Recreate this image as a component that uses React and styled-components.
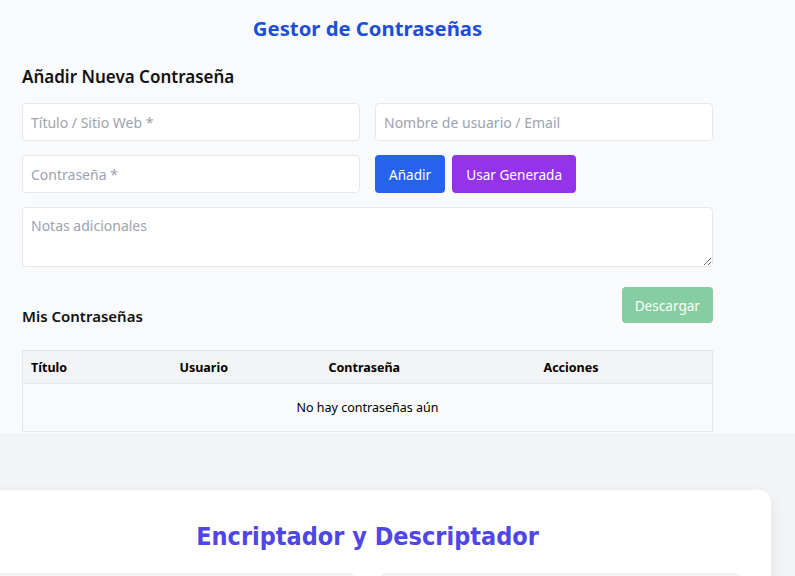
import React from 'react';
import styled, { createGlobalStyle } from 'styled-components';

const GlobalStyle = createGlobalStyle`
  html, body {
    margin: 0;
    padding: 0;
    background: #f3f4f6;
    font-family: "Noto Sans", "Open Sans", sans-serif;
    overflow: hidden;
  }
  * { box-sizing: border-box; }
`;

const ManagerSection = styled.section`
  background: #f9fafb;
  padding: 14px 0 1px 22px;
`;

const Container = styled.div`
  width: 691px;
`;

const PageTitle = styled.h1`
  margin: 0 0 23px;
  text-align: center;
  font-size: 20.3px;
  font-weight: 700;
  color: #1d4ed8;
  line-height: 28px;
`;

const SubTitle = styled.h2`
  margin: 0 0 14px;
  font-size: 17px;
  font-weight: 600;
  color: #111;
  line-height: 24px;
`;

const FormGrid = styled.div`
  display: grid;
  grid-template-columns: 1fr 1fr;
  gap: 14px 15px;
`;

const Input = styled.input`
  height: 38px;
  width: 100%;
  border: 1px solid #e5e7eb;
  border-radius: 4px;
  background: #fff;
  padding: 0 8px;
  font: inherit;
  font-size: 14px;
  outline: none;
  &::placeholder { color: #9ca3af; }
`;

const ButtonRow = styled.div`
  display: flex;
  gap: 7px;
`;

const Button = styled.button`
  height: ${p => p.$h || 38}px;
  padding: 0 ${p => p.$px || 14}px;
  border: none;
  border-radius: 4px;
  background: ${p => p.$bg};
  color: #fff;
  font: inherit;
  font-size: 13.6px;
  opacity: ${p => p.$faded ? 0.5 : 1};
  cursor: pointer;
`;

const TextArea = styled.textarea`
  grid-column: 1 / -1;
  height: 60px;
  border: 1px solid #e5e7eb;
  border-radius: 4px;
  background: #fff;
  padding: 8px;
  font: inherit;
  font-size: 14px;
  outline: none;
  resize: vertical;
  &::placeholder { color: #9ca3af; }
`;

const ListHeader = styled.div`
  display: flex;
  justify-content: space-between;
  align-items: flex-end;
  margin: 20px 0 27px;
`;

const ListTitle = styled.h3`
  margin: 0 0 -1px;
  font-size: 15px;
  font-weight: 600;
  color: #111;
  line-height: 15px;
`;

const Table = styled.table`
  width: 100%;
  border-collapse: collapse;
  border: 1px solid #e5e7eb;
  font-size: 12.5px;
`;

const Th = styled.th`
  text-align: left;
  background: #f3f4f6;
  font-weight: 700;
  height: 33px;
  padding: 0 8px;
  width: ${p => p.$w}px;
  border-bottom: 1px solid #e5e7eb;
  color: #000;
`;

const EmptyCell = styled.td`
  text-align: center;
  height: 48px;
  color: #000;
`;

const CryptoSection = styled.section`
  padding-top: 57px;
`;

const Card = styled.div`
  margin-left: -36px;
  width: 807px;
  background: #fff;
  border-radius: 12px;
  box-shadow: 0 4px 14px rgba(0, 0, 0, 0.08);
  padding: 28px 29px 0;
  height: 200px;
`;

const CardTitle = styled.h2`
  margin: 0 0 17px;
  text-align: center;
  font-family: "DejaVu Sans Condensed", "DejaVu Sans", sans-serif;
  font-size: 25px;
  font-weight: 700;
  color: #4f46e5;
  line-height: 38px;
`;

const Panels = styled.div`
  display: grid;
  grid-template-columns: 1fr 1fr;
  gap: 23px;
`;

const Panel = styled.div`
  height: 120px;
  background: #f3f4f6;
  border: 1px solid #eceef1;
  border-radius: 8px;
`;

export default function App() {
  return (
    <>
      <GlobalStyle />
      <ManagerSection>
        <Container>
          <PageTitle>Gestor de Contraseñas</PageTitle>
          <SubTitle>Añadir Nueva Contraseña</SubTitle>
          <FormGrid>
            <Input placeholder="Título / Sitio Web *" />
            <Input placeholder="Nombre de usuario / Email" />
            <Input placeholder="Contraseña *" />
            <ButtonRow>
              <Button $bg="#2563eb">Añadir</Button>
              <Button $bg="#9333ea">Usar Generada</Button>
            </ButtonRow>
            <TextArea placeholder="Notas adicionales" />
          </FormGrid>
          <ListHeader>
            <ListTitle>Mis Contraseñas</ListTitle>
            <Button $bg="#16a34a" $faded $h={36} $px={13}>Descargar</Button>
          </ListHeader>
          <Table>
            <thead>
              <tr>
                <Th $w={149}>Título</Th>
                <Th $w={149}>Usuario</Th>
                <Th $w={215}>Contraseña</Th>
                <Th>Acciones</Th>
              </tr>
            </thead>
            <tbody>
              <tr>
                <EmptyCell colSpan={4}>No hay contraseñas aún</EmptyCell>
              </tr>
            </tbody>
          </Table>
        </Container>
      </ManagerSection>
      <CryptoSection>
        <Card>
          <CardTitle>Encriptador y Descriptador</CardTitle>
          <Panels>
            <Panel />
            <Panel />
          </Panels>
        </Card>
      </CryptoSection>
    </>
  );
}
